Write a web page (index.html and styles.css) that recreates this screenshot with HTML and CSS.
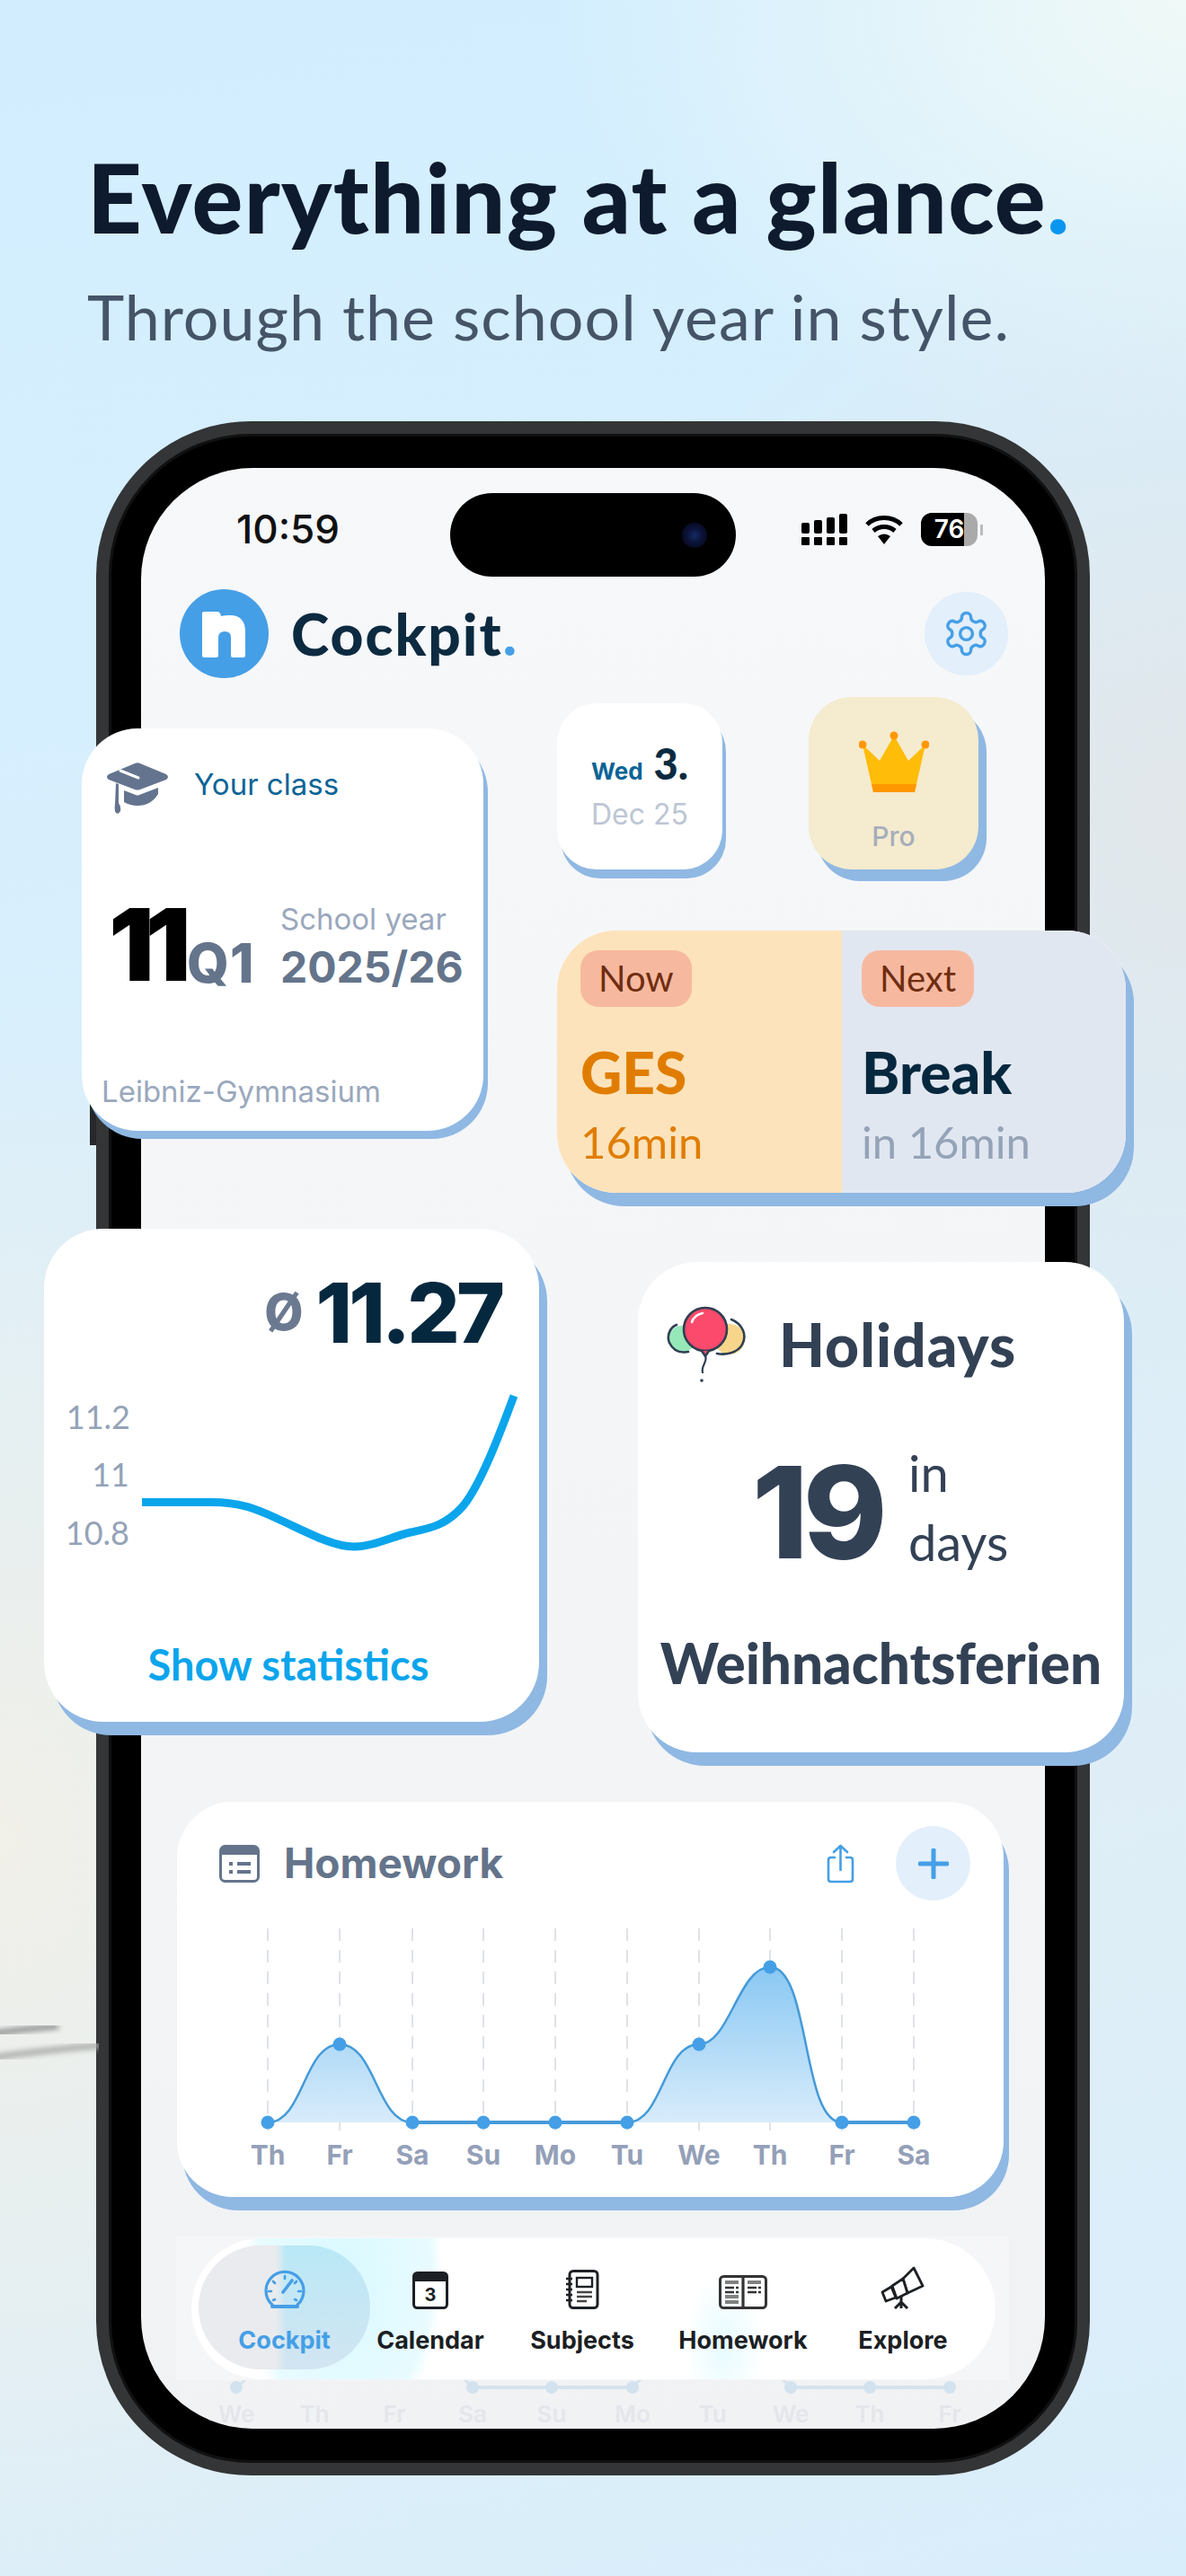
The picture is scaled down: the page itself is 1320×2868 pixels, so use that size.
FILE: index.html
```html
<!DOCTYPE html>
<html lang="en">
  <head>
    <meta charset="UTF-8" />
    <meta name="viewport" content="width=device-width, initial-scale=1.0" />
    <title>Everything at a glance</title>
    <link rel="stylesheet" href="styles.css">
  </head>
  <body>
    <div class="stage">
      <!-- Background streak on the left edge -->
      <svg class="streak" viewBox="0 0 110 130" width="110" height="130">
        <defs><filter id="soft"><feGaussianBlur stdDeviation="3"></feGaussianBlur></filter><filter id="softer"><feGaussianBlur stdDeviation="12"></feGaussianBlur></filter></defs>
        <path d="M-20 35H110" stroke="#d9d9d5" stroke-width="36" fill="none" filter="url(#softer)"></path>
        <path d="M-10 74C20 70 40 68 65 66" stroke="#77797a" stroke-width="5" fill="none" filter="url(#soft)"></path>
        <path d="M-10 101C40 94 80 90 115 87" stroke="#a3a5a3" stroke-width="6" fill="none" filter="url(#soft)"></path>
      </svg>

      <header class="hero">
        <h1>Everything at a glance<span class="dot">.</span></h1>
        <p>Through the school year in style.</p>
      </header>

      <!-- Phone -->
      <div class="phone">
        <div class="screen">
          <div class="status">
            <span class="time">10:59</span>
            <div class="island"><span class="camera"></span></div>
            <div class="status-icons">
              <svg width="52" height="37" viewBox="0 0 52 37" fill="#000">
                <rect x="0" y="11" width="9" height="12" rx="2"></rect><rect x="14" y="8" width="9" height="15" rx="2"></rect><rect x="28" y="5" width="9" height="18" rx="2"></rect><rect x="42" y="1" width="9" height="22" rx="2"></rect>
                <rect x="0" y="27" width="9" height="9" rx="1"></rect><rect x="14" y="27" width="9" height="9" rx="1"></rect><rect x="28" y="27" width="9" height="9" rx="1"></rect><rect x="42" y="27" width="9" height="9" rx="1"></rect>
              </svg>
              <svg class="wifi" width="42" height="34" viewBox="0 0 42 34" fill="none" stroke="#000" stroke-width="5">
                <path d="M2 11 C12 1 30 1 40 11"></path><path d="M9 18 C16 12 26 12 33 18"></path>
                <path d="M14 24 Q21 19 28 24 L21 33Z" fill="#000" stroke="none"></path>
              </svg>
              <div class="battery">76</div>
              <span class="battery-nub"></span>
            </div>
          </div>

          <div class="app-header">
            <svg class="logo" width="99" height="99" viewBox="0 0 99 99">
              <circle cx="49.5" cy="49.5" r="49.5" fill="#459fe6"></circle>
              <path d="M27 25H42Q45 25 46 30Q50 29 56 29C68 29 73 36 73 47V74Q73 76 71 76H59Q57 76 57 74V54Q57 47 50 47Q43 47 43 54V74Q43 76 41 76H27Q25 76 25 74V27Q25 25 27 25Z" fill="#fff"></path>
            </svg>
            <span class="app-title">Cockpit<span class="title-dot">.</span></span>
            <button class="round-btn settings">
              <svg width="55" height="55" viewBox="0 0 24 24" fill="none" stroke="#459fe6" stroke-width="1.5" stroke-linejoin="round">
                <path d="M12.22 2h-.44a2 2 0 0 0-2 2v.18a2 2 0 0 1-1 1.73l-.43.25a2 2 0 0 1-2 0l-.15-.08a2 2 0 0 0-2.73.73l-.22.38a2 2 0 0 0 .73 2.73l.15.1a2 2 0 0 1 1 1.72v.51a2 2 0 0 1-1 1.74l-.15.09a2 2 0 0 0-.73 2.73l.22.38a2 2 0 0 0 2.73.73l.15-.08a2 2 0 0 1 2 0l.43.25a2 2 0 0 1 1 1.73V20a2 2 0 0 0 2 2h.44a2 2 0 0 0 2-2v-.18a2 2 0 0 1 1-1.73l.43-.25a2 2 0 0 1 2 0l.15.08a2 2 0 0 0 2.73-.73l.22-.39a2 2 0 0 0-.73-2.73l-.15-.08a2 2 0 0 1-1-1.74v-.5a2 2 0 0 1 1-1.74l.15-.09a2 2 0 0 0 .73-2.73l-.22-.38a2 2 0 0 0-2.73-.73l-.15.08a2 2 0 0 1-2 0l-.43-.25a2 2 0 0 1-1-1.73V4a2 2 0 0 0-2-2z"></path>
                <circle cx="12" cy="12" r="3"></circle>
              </svg>
            </button>
          </div>

          <!-- Homework card -->
          <section class="homework">
            <div class="homework-head">
              <svg width="45" height="42" viewBox="0 0 45 42">
                <rect x="1.5" y="1.5" width="42" height="39" rx="5" fill="#fff" stroke="#64748b" stroke-width="3"></rect>
                <path d="M1.5 6.5a5 5 0 0 1 5-5h32a5 5 0 0 1 5 5V11H1.5z" fill="#64748b"></path>
                <rect x="11" y="19" width="4" height="4" fill="#64748b"></rect><rect x="20" y="19" width="15" height="4" fill="#64748b"></rect>
                <rect x="11" y="28" width="4" height="4" fill="#64748b"></rect><rect x="20" y="28" width="15" height="4" fill="#64748b"></rect>
              </svg>
              <h2>Homework</h2>
              <svg class="share" width="31" height="44" viewBox="0 0 31 44" fill="none" stroke="#459fe6" stroke-width="2.6" stroke-linecap="round" stroke-linejoin="round">
                <path d="M9 15H5Q2 15 2 18V39Q2 42 5 42H26Q29 42 29 39V18Q29 15 26 15H22"></path>
                <path d="M15.5 29V2M8 9L15.5 2L23 9"></path>
              </svg>
              <button class="round-btn plus">
                <svg width="34" height="34" viewBox="0 0 34 34" stroke="#459fe6" stroke-width="5" stroke-linecap="round"><path d="M17 2V32M2 17H32"></path></svg>
              </button>
            </div>
            <svg class="hw-chart" width="920" height="290" viewBox="197 2130 920 290">
              <defs>
                <linearGradient id="hwFill" gradientUnits="userSpaceOnUse" x1="0" y1="2190" x2="0" y2="2363">
                  <stop offset="0" stop-color="#8ac8f3"></stop>
                  <stop offset="1" stop-color="#d8ecfb"></stop>
                </linearGradient>
              </defs>
              <g stroke="#d5d9df" stroke-width="1.5" stroke-dasharray="14 10">
                <path d="M298 2147V2372M378 2147V2372M459 2147V2372M538 2147V2372M618 2147V2372M698 2147V2372M778 2147V2372M857 2147V2372M937 2147V2372M1017 2147V2372"></path>
              </g>
              <path d="M298 2363C338 2363 338 2276 378 2276C418 2276 419 2363 459 2363Z" fill="url(#hwFill)"></path>
              <path d="M698 2363C738 2363 738 2276 778 2276C812 2276 822 2190 857 2190C902 2190 892 2363 937 2363Z" fill="url(#hwFill)"></path>
              <g fill="none" stroke="#459ad8" stroke-width="2.5">
                <path d="M298 2363C338 2363 338 2276 378 2276C418 2276 419 2363 459 2363"></path>
                <path d="M698 2363C738 2363 738 2276 778 2276C812 2276 822 2190 857 2190C902 2190 892 2363 937 2363"></path>
                <path d="M459 2363H698M937 2363H1017" stroke-width="4"></path>
              </g>
              <g fill="#459fe6">
                <circle cx="298" cy="2363" r="7.5"></circle><circle cx="378" cy="2276" r="7.5"></circle><circle cx="459" cy="2363" r="7.5"></circle>
                <circle cx="538" cy="2363" r="7.5"></circle><circle cx="618" cy="2363" r="7.5"></circle><circle cx="698" cy="2363" r="7.5"></circle>
                <circle cx="778" cy="2276" r="7.5"></circle><circle cx="857" cy="2190" r="7.5"></circle><circle cx="937" cy="2363" r="7.5"></circle><circle cx="1017" cy="2363" r="7.5"></circle>
              </g>
              <g class="hw-days" text-anchor="middle">
                <text x="298" y="2410">Th</text><text x="378" y="2410">Fr</text><text x="459" y="2410">Sa</text><text x="538" y="2410">Su</text><text x="618" y="2410">Mo</text>
                <text x="698" y="2410">Tu</text><text x="778" y="2410">We</text><text x="857" y="2410">Th</text><text x="937" y="2410">Fr</text><text x="1017" y="2410">Sa</text>
              </g>
            </svg>
          </section>

          <!-- Tab bar -->
          <div class="dock">
            <nav class="tabs">
              <div class="tab active">
                <svg width="46" height="44" viewBox="0 0 46 44" fill="none" stroke="#459fe6" stroke-width="3.2" stroke-linecap="round">
                  <path d="M9 39A21 21 0 1 1 37 39"></path>
                  <path d="M9 41H37" stroke-width="4"></path>
                  <path d="M23 7V10M10 13L12 15M36 13L34 15M5 24H8M38 24H41M10 34L12 33M36 34L34 33" stroke-width="2.6"></path>
                  <path d="M21 25L31 12" stroke-width="3.6"></path>
                </svg>
                <span>Cockpit</span>
              </div>
              <div class="tab">
                <svg width="40" height="42" viewBox="0 0 40 42">
                  <rect x="1.5" y="1.5" width="37" height="39" rx="4" fill="#fff" stroke="#1c1f24" stroke-width="3"></rect>
                  <path d="M1.5 5.5a4 4 0 0 1 4-4h29a4 4 0 0 1 4 4V11H1.5z" fill="#1c1f24"></path>
                  <text x="20" y="33" text-anchor="middle" class="cal-day">3</text>
                </svg>
                <span>Calendar</span>
              </div>
              <div class="tab">
                <svg width="38" height="44" viewBox="0 0 38 44" fill="none" stroke="#1c1f24" stroke-width="3">
                  <rect x="5" y="1.5" width="31" height="41" rx="4"></rect>
                  <path d="M1 10H8M1 16H8M1 22H8M1 28H8M1 34H8" stroke-width="2.6"></path>
                  <rect x="13" y="9" width="17" height="10" stroke-width="2.4"></rect>
                  <path d="M13 25H30M13 30H30M13 35H24" stroke-width="2.6" stroke="#444"></path>
                </svg>
                <span>Subjects</span>
              </div>
              <div class="tab">
                <svg width="54" height="38" viewBox="0 0 54 38" fill="none" stroke="#333" stroke-width="3">
                  <rect x="1.5" y="1.5" width="51" height="35" rx="4"></rect>
                  <path d="M27 2V36" stroke-width="3.2"></path>
                  <path d="M7 8H22M7 24H22M7 30H22" stroke="#808080" stroke-width="4"></path>
                  <path d="M7 14H22M7 19H22M32 14H47M32 19H47" stroke="#333" stroke-width="2.4" stroke-dasharray="10 2"></path>
                  <path d="M32 8H47" stroke="#808080" stroke-width="4"></path>
                </svg>
                <span>Homework</span>
              </div>
              <div class="tab">
                <svg width="50" height="48" viewBox="0 0 50 48" fill="none" stroke="#1c1f24" stroke-width="2.8" stroke-linejoin="round">
                  <path d="M25 14L37 2L47 22L30 30Z" fill="#fff"></path>
                  <path d="M13 22L25 14L30 30L18 36Z" fill="#fff"></path>
                  <path d="M2 29L12 23L17 35L6 39Z" fill="#fff"></path>
                  <path d="M23 34V40M23 40L16 47M23 40L23 47M23 40L30 47" stroke-width="3"></path>
                </svg>
                <span>Explore</span>
              </div>
            </nav>
          </div>

          <!-- Faded chart showing through under the bar -->
          <svg class="ghost" width="1006" height="54" viewBox="157 2650 1006 54">
            <path d="M526 2658H704M880 2658H1057" stroke="#d5e3ee" stroke-width="4"></path>
            <path d="M263 2658L275 2648M526 2658L516 2648M704 2658L714 2648M880 2658L870 2648" stroke="#d5e3ee" stroke-width="3"></path>
            <g fill="#d2e2ee">
              <circle cx="263" cy="2658" r="7"></circle><circle cx="526" cy="2658" r="7"></circle><circle cx="614" cy="2658" r="7"></circle><circle cx="704" cy="2658" r="7"></circle>
              <circle cx="880" cy="2658" r="7"></circle><circle cx="968" cy="2658" r="7"></circle><circle cx="1057" cy="2658" r="7"></circle>
            </g>
            <g class="ghost-days" text-anchor="middle">
              <text x="263" y="2697">We</text><text x="350" y="2697">Th</text><text x="439" y="2697">Fr</text><text x="526" y="2697">Sa</text><text x="614" y="2697">Su</text>
              <text x="704" y="2697">Mo</text><text x="793" y="2697">Tu</text><text x="880" y="2697">We</text><text x="968" y="2697">Th</text><text x="1057" y="2697">Fr</text>
            </g>
          </svg>
        </div>
      </div>
      <span class="side-key"></span>

      <!-- Cards floating over the phone -->
      <section class="float-card class-card">
        <div class="class-head">
          <svg width="70" height="58" viewBox="0 0 70 58" fill="#64748f">
            <path d="M32 2Q35 0.5 38 2L67 14Q71 17 67 20L38 31Q35 32 32 31L3 20Q-1 17 3 14Z"></path>
            <path d="M20 32L33 37Q35 38 37 37L58 29V36Q50 49 35 49Q27 49 20 45Z"></path>
            <path d="M11 24L14 25V46Q17 50 16 55Q14 59 11 57Q9 55 10 47Z"></path>
            <path d="M16 10L36 18" stroke="#fff" stroke-width="3" stroke-linecap="round"></path>
          </svg>
          <span>Your class</span>
        </div>
        <div class="class-main">
          <span class="class-num">11</span>
          <span class="class-q">Q1</span>
          <div class="class-year">
            <span class="year-label">School year</span>
            <span class="year-value">2025/26</span>
          </div>
        </div>
        <div class="class-school">Leibniz-Gymnasium</div>
      </section>

      <section class="float-card date-card">
        <div class="date-top"><span class="date-wd">Wed</span><span class="date-day">3.</span></div>
        <div class="date-month">Dec 25</div>
      </section>

      <section class="float-card pro-card">
        <svg width="78" height="68" viewBox="0 0 78 68">
          <path d="M4 15L23 33L39 5L55 33L74 15L62 68H16Z" fill="#ffbc08"></path>
          <path d="M14 59H64L62 68H16Z" fill="#ff9800"></path>
          <circle cx="4" cy="15" r="4.5" fill="#ff9800"></circle><circle cx="39" cy="5" r="4.5" fill="#ff9800"></circle><circle cx="74" cy="15" r="4.5" fill="#ff9800"></circle>
        </svg>
        <span>Pro</span>
      </section>

      <section class="float-card lesson-card">
        <div class="lesson now">
          <span class="badge">Now</span>
          <div class="lesson-name">GES</div>
          <div class="lesson-time">16min</div>
        </div>
        <div class="lesson next">
          <span class="badge">Next</span>
          <div class="lesson-name">Break</div>
          <div class="lesson-time">in 16min</div>
        </div>
      </section>

      <section class="float-card stats-card">
        <div class="avg"><span class="avg-sign">Ø</span><span class="avg-value">11.27</span></div>
        <svg class="stats-chart" width="551" height="210" viewBox="49 1540 551 210">
          <g class="axis" text-anchor="end">
            <text x="145" y="1591">11.2</text><text x="144" y="1655">11</text><text x="144" y="1720">10.8</text>
          </g>
          <path d="M158 1672.5H236C268 1672.5 285 1680 307 1690C340 1705 370 1722 394 1722C415 1722 435 1711 457 1706C475 1702 495 1700 516 1676C535 1652 555 1600 572 1554" fill="none" stroke="#0ba5ec" stroke-width="9"></path>
        </svg>
        <div class="stats-link">Show statistics</div>
      </section>

      <section class="float-card holiday-card">
        <div class="holiday-head">
          <svg width="88" height="89" viewBox="0 0 88 89" fill="none" stroke="#2f3f52" stroke-width="2.6" stroke-linecap="round">
            <circle cx="17" cy="39" r="15" fill="#97e8b9" stroke="none"></circle>
            <circle cx="70" cy="39" r="17" fill="#f7d68b" stroke="none"></circle>
            <path d="M11 23C3 26 0 36 3 43C7 51 14 55 24 53"></path>
            <path d="M72 17C84 22 90 34 84 45C79 54 66 57 56 55"></path>
            <circle cx="43" cy="28" r="24" fill="#fb4a6c"></circle>
            <path d="M28 20C30 14 35 11 40 10" stroke="#fff"></path>
            <path d="M39 52L43 58L47 52" fill="#fb4a6c"></path>
            <path d="M43 58C46 64 38 68 40 76" stroke-width="2.2"></path>
            <circle cx="39" cy="85" r="1.8" fill="#2f3f52" stroke="none"></circle>
          </svg>
          <h2>Holidays</h2>
        </div>
        <div class="holiday-count">
          <span class="holiday-num">19</span>
          <div class="holiday-unit"><span>in</span><span>days</span></div>
        </div>
        <div class="holiday-name">Weihnachtsferien</div>
      </section>
    </div>
  </body>
</html>
```

FILE: styles.css
```css
/* Page */
* {
  box-sizing: border-box;
}

body {
  margin: 0;
  font-family: "Lato", "Liberation Sans", sans-serif;
}

.stage {
  position: relative;
  width: 1320px;
  height: 2868px;
  overflow: hidden;
  background:
    radial-gradient(ellipse 760px 900px at 0 2050px, #f1f0e9 0%, rgba(241, 240, 233, 0) 100%),
    radial-gradient(ellipse 700px 700px at 1320px 900px, #e2e7ea 0%, rgba(226, 231, 234, 0) 100%),
    radial-gradient(ellipse 700px 500px at 1320px 0, #f0f9f7 0%, rgba(240, 249, 247, 0) 100%),
    linear-gradient(170deg, #d2eefe 0%, #d6effe 25%, #dfeef6 70%, #d9eefb 100%);
}

.streak {
  position: absolute;
  left: 0;
  top: 2190px;
}

/* Heading */
.hero {
  height: 469px;
  padding: 166px 0 0 97px;
}

.hero h1 {
  margin: 0;
  font-size: 106px;
  line-height: 1;
  font-weight: 900;
  letter-spacing: 1.3px;
  color: #0e1a2e;
}

.hero .dot {
  color: #0a96f0;
}

.hero p {
  margin: 45px 0 0;
  font-size: 70px;
  line-height: 1;
  font-weight: 400;
  letter-spacing: 1px;
  color: #455468;
}

/* Phone */
.phone {
  width: 1106px;
  height: 2287px;
  margin-left: 107px;
  padding: 38px 36px;
  background: #000;
  border: 14px solid #333537;
  border-radius: 172px;
  box-shadow: inset 0 0 0 3px #111;
}

.side-key {
  position: absolute;
  left: 100px;
  top: 1225px;
  width: 7px;
  height: 50px;
  background: #26282a;
}

.screen {
  height: 2183px;
  overflow: hidden;
  border-radius: 124px;
  background: linear-gradient(#f6f8fa, #f1f2f4);
}

.status {
  display: flex;
  padding: 28px 0 0 106px;
}

.time {
  width: 238px;
  margin-top: 18px;
  font-family: "Inter", sans-serif;
  font-size: 44px;
  line-height: 1;
  font-weight: 500;
  color: #111;
}

.island {
  display: flex;
  align-items: center;
  justify-content: flex-end;
  width: 318px;
  height: 93px;
  padding-right: 32px;
  border-radius: 47px;
  background: #000;
}

.camera {
  width: 28px;
  height: 28px;
  border-radius: 50%;
  background: radial-gradient(circle, #142a66 0%, #0a1236 45%, #05060f 100%);
}

.status-icons {
  display: flex;
  align-items: center;
  height: 37px;
  margin: 22px 0 0 73px;
}

.wifi {
  margin-left: 19px;
}

.battery {
  width: 63px;
  height: 37px;
  margin-left: 20px;
  border-radius: 12px;
  background: linear-gradient(to right, #000 76%, #aaa 76%);
  font-family: "Inter", sans-serif;
  font-size: 28px;
  line-height: 37px;
  font-weight: 600;
  text-align: center;
  color: #fff;
}

.battery-nub {
  width: 3px;
  height: 12px;
  margin-left: 3px;
  background: #bbb;
}

/* App header */
.app-header {
  display: flex;
  align-items: center;
  margin: 14px 41px 0 43px;
  height: 99px;
}

.app-title {
  margin-left: 25px;
  font-size: 64px;
  font-weight: 900;
  line-height: 1;
  letter-spacing: 2px;
  color: #0c2a40;
}

.title-dot {
  color: #459fe6;
}

.round-btn {
  display: flex;
  align-items: center;
  justify-content: center;
  padding: 0;
  border: none;
  border-radius: 50%;
  background: #e3effb;
}

.settings {
  width: 93px;
  height: 93px;
  margin-left: auto;
}

/* Homework */
.homework {
  width: 920px;
  height: 440px;
  margin: 1251px 0 0 40px;
  border-radius: 62px;
  background: #fff;
  box-shadow: 6px 15px 0 #8fb8e3;
}

.homework-head {
  display: flex;
  align-items: center;
  padding: 27px 37px 0 47px;
}

.homework-head h2 {
  margin: 0 0 0 27px;
  font-family: "Inter", sans-serif;
  font-size: 46px;
  line-height: 83px;
  font-weight: 700;
  color: #64748b;
}

.share {
  margin-left: auto;
}

.plus {
  width: 83px;
  height: 83px;
  margin-left: 46px;
}

.hw-chart {
  display: block;
  margin-top: 14px;
}

.hw-days text {
  font-family: "Inter", sans-serif;
  font-size: 30px;
  font-weight: 700;
  fill: #94a0b8;
}

/* Tab bar */
.dock {
  height: 160px;
  margin: 44px 40px 0 39px;
  padding: 2px 15px 1px 17px;
  background: rgba(255, 255, 255, 0.3);
}

.tabs {
  display: grid;
  grid-template-columns: 191px 134px 204px 154px 202px;
  height: 157px;
  padding: 8px 0 11px 8px;
  border-radius: 79px;
  background:
    radial-gradient(ellipse 45px 80px at 593px 120px, #e6fbff 0%, rgba(230, 251, 255, 0) 100%),
    radial-gradient(ellipse 110px 190px at 170px 40px, #d9f9ff 0%, #e8fbff 88%, rgba(232, 251, 255, 0) 100%),
    rgba(255, 255, 255, 0.92);
}

.tab {
  display: flex;
  flex-direction: column;
  align-items: center;
  justify-content: flex-end;
  padding-bottom: 19px;
  gap: 21px;
  font-family: "Inter", sans-serif;
  font-size: 27px;
  line-height: 1;
  font-weight: 700;
  color: #1c1f24;
}

.tab.active {
  border-radius: 70px;
  background:
    linear-gradient(to right, #e9ebee 45%, rgba(233, 235, 238, 0) 51%),
    linear-gradient(#b9e8f6, #d3e5f2);
  color: #459fe6;
}

.cal-day {
  font-size: 20px;
  font-weight: 700;
  fill: #1c1f24;
}

.ghost {
  display: block;
}

.ghost-days text {
  font-family: "Inter", sans-serif;
  font-size: 26px;
  font-weight: 600;
  fill: #e4e6ec;
}

/* Floating cards */
.float-card {
  position: absolute;
  background: #fff;
  box-shadow: 9px 15px 0 #8fb8e3;
}

.class-card {
  left: 91px;
  top: 811px;
  width: 447px;
  height: 448px;
  padding-top: 37px;
  border-radius: 62px;
  box-shadow: 5px 9px 0 #8fb8e3;
}

.class-head {
  display: flex;
  align-items: flex-start;
  gap: 28px;
  padding-left: 27px;
  font-family: "Inter", sans-serif;
  font-size: 33px;
  line-height: 1;
  color: #0a6496;
}

.class-head span {
  margin-top: 9px;
}

.class-main {
  display: flex;
  align-items: flex-end;
  margin: 89px 0 0 30px;
  font-family: "Inter", sans-serif;
  line-height: 1;
}

.class-num {
  width: 87px;
  font-size: 112px;
  font-weight: 900;
  letter-spacing: -10px;
  color: #000;
}

.class-q {
  width: 104px;
  margin-bottom: 5px;
  font-size: 60px;
  font-weight: 800;
  letter-spacing: 1px;
  color: #64748b;
}

.class-year {
  display: flex;
  flex-direction: column;
  gap: 13px;
  margin-bottom: 6px;
}

.year-label {
  font-size: 33px;
  color: #9aa8bd;
}

.year-value {
  font-size: 48px;
  font-weight: 700;
  color: #64748b;
}

.class-school {
  margin: 92px 0 0 22px;
  font-family: "Inter", sans-serif;
  font-size: 33px;
  line-height: 1;
  color: #9aa8bd;
}

.date-card {
  left: 620px;
  top: 783px;
  width: 184px;
  height: 185px;
  padding-top: 44px;
  border-radius: 44px;
  box-shadow: 4px 10px 0 #8fb8e3;
  text-align: center;
}

.date-top {
  display: flex;
  align-items: baseline;
  justify-content: center;
  gap: 12px;
  line-height: 1;
}

.date-wd {
  font-family: "Inter", sans-serif;
  font-size: 26px;
  font-weight: 700;
  color: #0a6496;
}

.date-day {
  font-size: 47px;
  font-weight: 900;
  color: #0c2a40;
}

.date-month {
  margin-top: 17px;
  font-family: "Inter", sans-serif;
  font-size: 32px;
  line-height: 1;
  color: #bcc6d4;
}

.pro-card {
  display: flex;
  flex-direction: column;
  align-items: center;
  left: 900px;
  top: 776px;
  width: 189px;
  height: 192px;
  padding-top: 38px;
  border-radius: 48px;
  background: #f5ebcf;
  box-shadow: 9px 13px 0 #8fb8e3;
  font-family: "Inter", sans-serif;
  font-size: 30px;
  line-height: 1;
  font-weight: 500;
  color: #a6aebb;
}

.pro-card span {
  margin-top: 34px;
}

.lesson-card {
  display: flex;
  left: 620px;
  top: 1036px;
  width: 633px;
  height: 292px;
  overflow: visible;
  border-radius: 66px;
}

.lesson {
  padding-top: 22px;
}

.now {
  width: 317px;
  padding-left: 26px;
  border-radius: 66px 0 0 66px;
  background: #fde3bb;
  color: #e07d00;
}

.next {
  flex: 1;
  padding-left: 22px;
  border-radius: 0 66px 66px 0;
  background: #e1e7f0;
  color: #94a3b8;
}

.badge {
  display: inline-block;
  height: 63px;
  padding: 0 20px;
  border-radius: 20px;
  background: #f6b9a0;
  font-size: 40px;
  line-height: 63px;
  color: #6f2d10;
}

.lesson-name {
  margin-top: 41px;
  font-size: 64px;
  line-height: 1;
  font-weight: 900;
}

.next .lesson-name {
  color: #05283f;
}

.lesson-time {
  margin-top: 21px;
  font-size: 49px;
  line-height: 1;
}

.stats-card {
  left: 49px;
  top: 1368px;
  width: 551px;
  height: 549px;
  padding-top: 48px;
  border-radius: 66px;
}

.avg {
  display: flex;
  align-items: flex-start;
  justify-content: flex-end;
  gap: 14px;
  padding-right: 42px;
  font-family: "Inter", sans-serif;
  line-height: 1;
}

.avg-sign {
  margin-top: 17px;
  font-size: 56px;
  font-weight: 800;
  color: #6b7a90;
}

.avg-value {
  font-size: 92px;
  font-weight: 800;
  letter-spacing: -4px;
  color: #05283f;
}

.stats-chart {
  display: block;
  margin-top: 32px;
}

.axis text {
  font-size: 36px;
  fill: #94a3b8;
}

.stats-link {
  margin-top: 80px;
  padding-right: 7px;
  font-size: 47px;
  line-height: 1;
  font-weight: 700;
  text-align: center;
  color: #0ba5ec;
}

.holiday-card {
  left: 710px;
  top: 1405px;
  width: 541px;
  height: 546px;
  padding-top: 47px;
  border-radius: 66px;
  color: #334155;
}

.holiday-head {
  display: flex;
  align-items: flex-start;
  gap: 37px;
  padding-left: 32px;
}

.holiday-head h2 {
  margin: 12px 0 0;
  font-size: 66px;
  line-height: 1;
  font-weight: 900;
  letter-spacing: 1px;
}

.holiday-count {
  display: flex;
  align-items: flex-start;
  margin: 71px 0 0 127px;
}

.holiday-num {
  width: 174px;
  font-family: "Inter", sans-serif;
  font-size: 142px;
  line-height: 1;
  font-weight: 800;
  letter-spacing: -6px;
}

.holiday-unit {
  display: flex;
  flex-direction: column;
  margin-top: -11px;
  font-size: 56px;
  line-height: 77px;
}

.holiday-name {
  margin-top: 65px;
  font-size: 62px;
  line-height: 1;
  font-weight: 900;
  text-align: center;
}
```
